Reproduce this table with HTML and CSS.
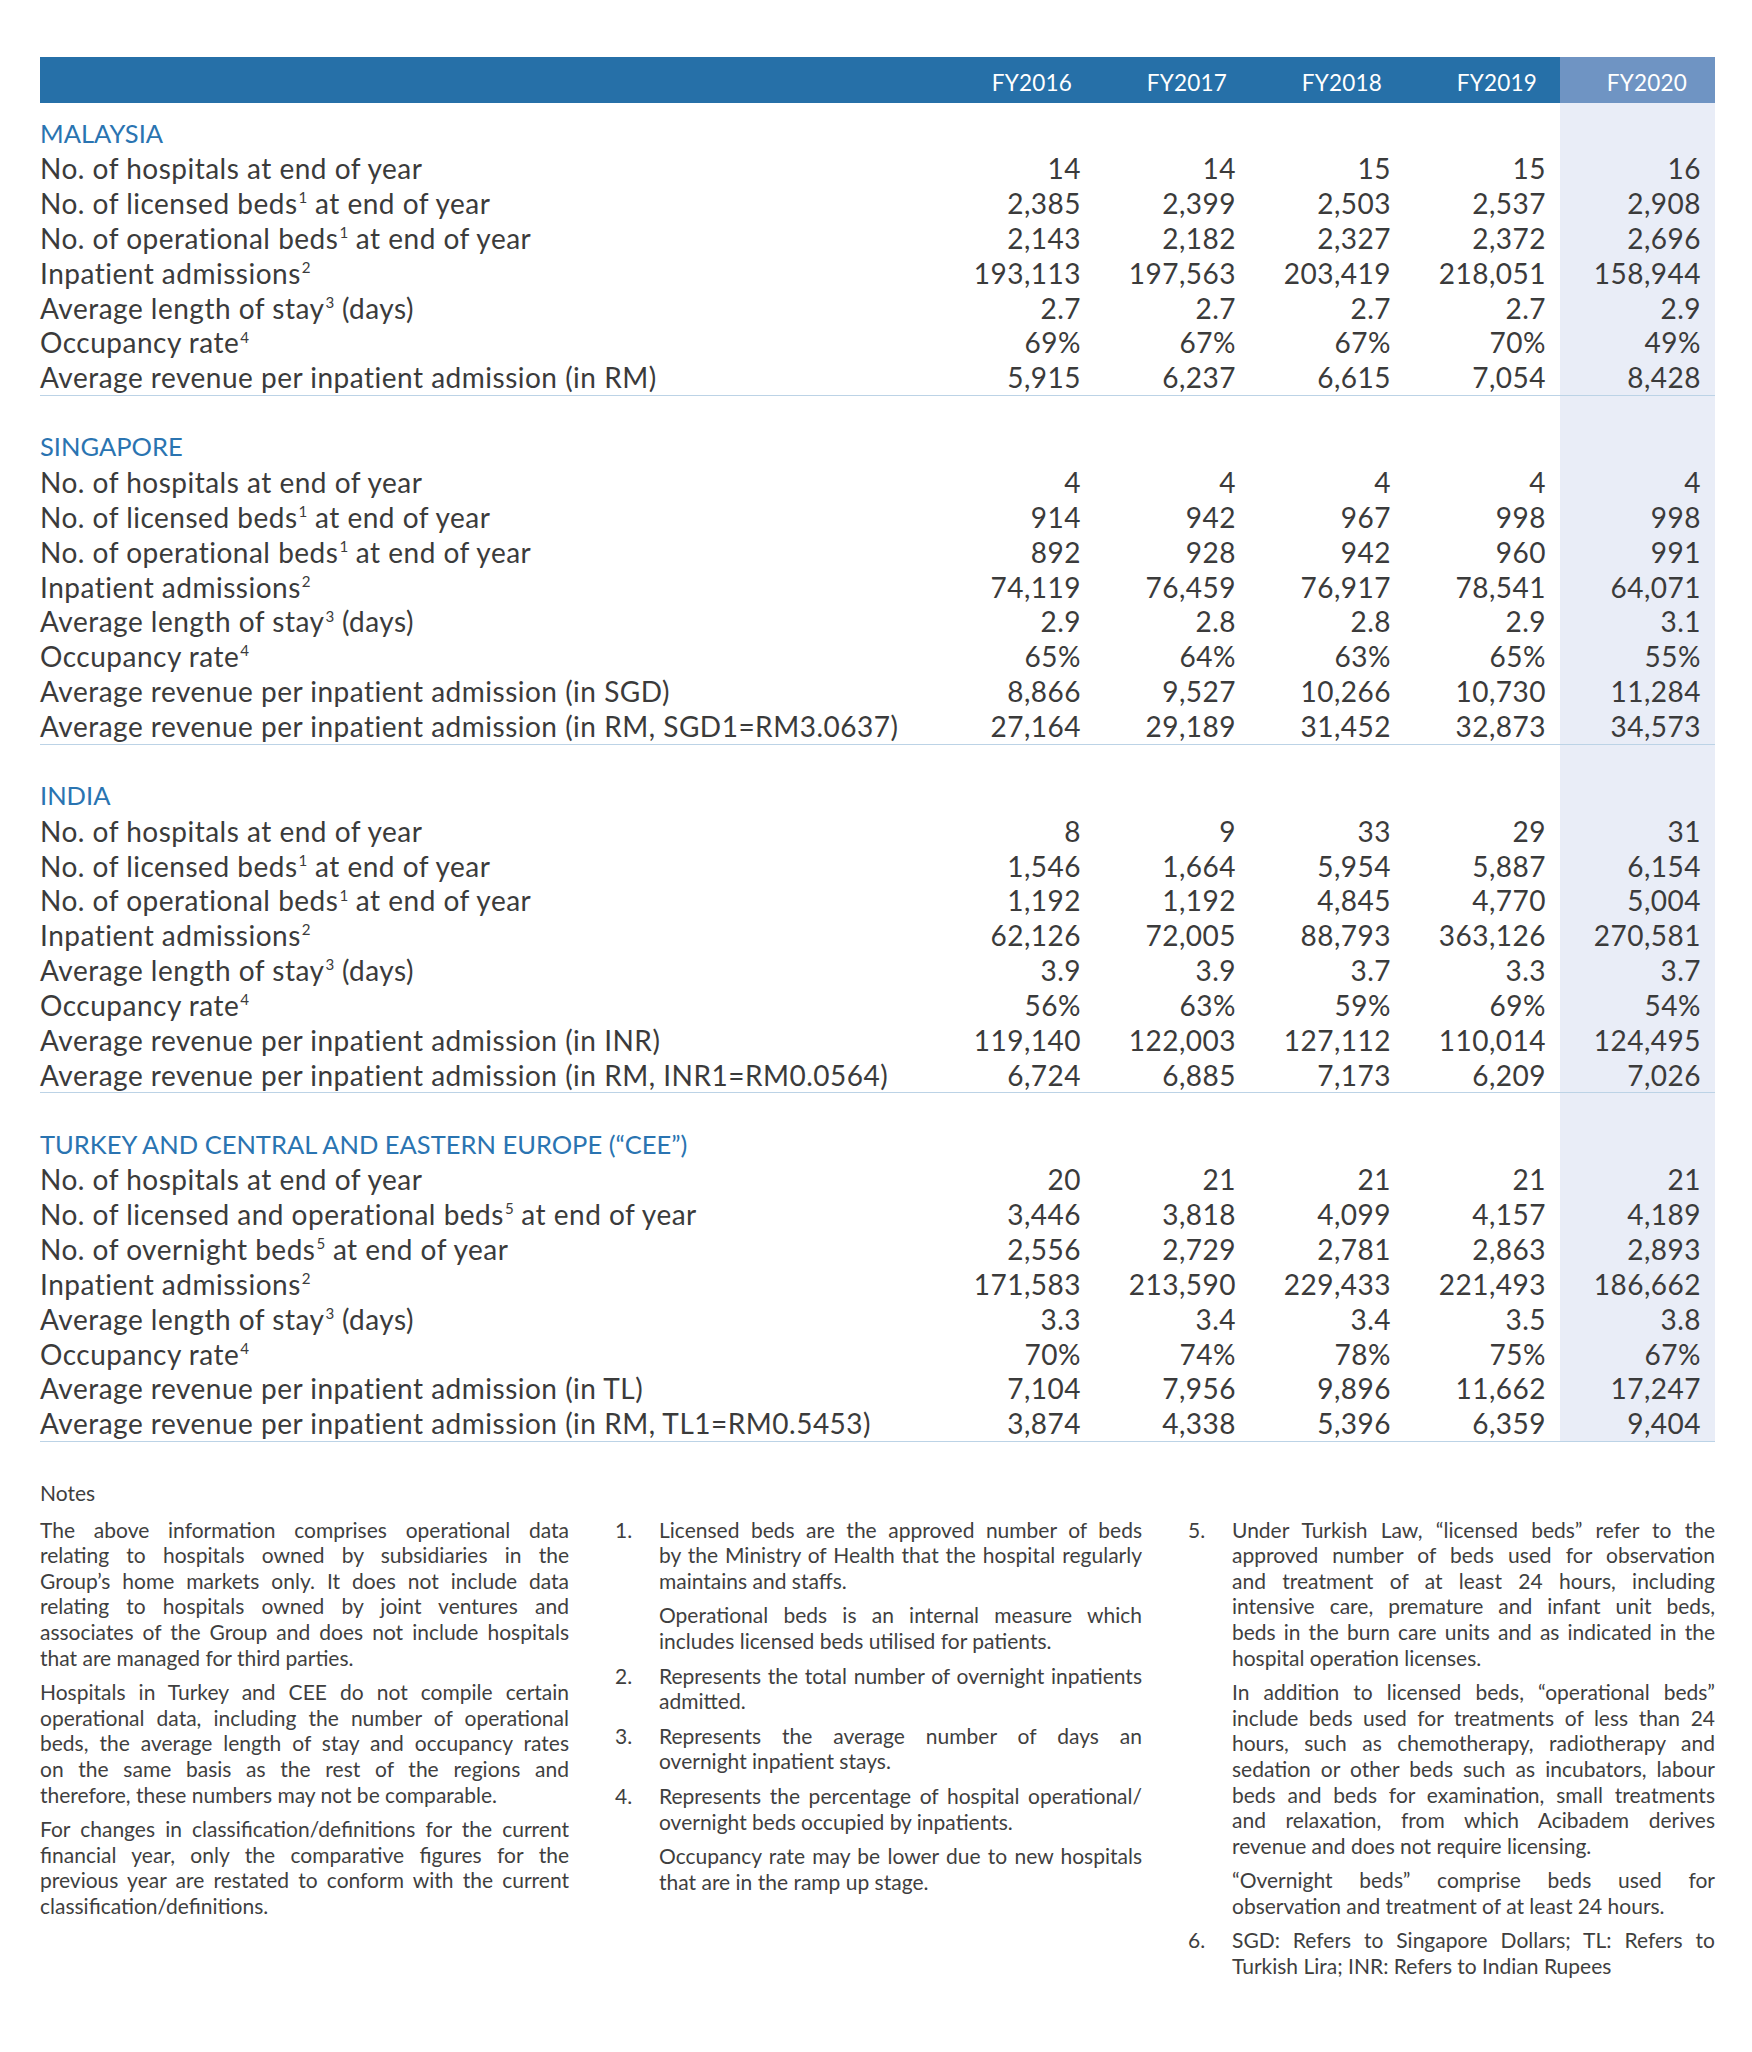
FILE: index.html
```html
<!DOCTYPE html>
<html lang="en">
<head>
<meta charset="utf-8">
<title>Operational statistics</title>
<link rel="stylesheet" href="styles.css">
</head>
<body>
<div class="page">
<table class="ops">
<colgroup><col class="c-label"><col class="c-num"><col class="c-num"><col class="c-num"><col class="c-num"><col class="c-num c-cur"></colgroup>
<thead>
<tr><th class="h-label"></th><th>FY2016</th><th>FY2017</th><th>FY2018</th><th>FY2019</th><th class="h-cur">FY2020</th></tr>
</thead>
<tbody>
<tr class="gap-top"><td></td><td></td><td></td><td></td><td></td><td></td></tr>
<tr class="region"><td>MALAYSIA</td><td></td><td></td><td></td><td></td><td></td></tr>
<tr><td>No. of hospitals at end of year</td><td>14</td><td>14</td><td>15</td><td>15</td><td>16</td></tr>
<tr><td>No. of licensed beds<sup class="fn">1</sup> at end of year</td><td>2,385</td><td>2,399</td><td>2,503</td><td>2,537</td><td>2,908</td></tr>
<tr><td>No. of operational beds<sup class="fn">1</sup> at end of year</td><td>2,143</td><td>2,182</td><td>2,327</td><td>2,372</td><td>2,696</td></tr>
<tr><td>Inpatient admissions<sup class="fn">2</sup></td><td>193,113</td><td>197,563</td><td>203,419</td><td>218,051</td><td>158,944</td></tr>
<tr><td>Average length of stay<sup class="fn">3</sup> (days)</td><td>2.7</td><td>2.7</td><td>2.7</td><td>2.7</td><td>2.9</td></tr>
<tr><td>Occupancy rate<sup class="fn">4</sup></td><td>69%</td><td>67%</td><td>67%</td><td>70%</td><td>49%</td></tr>
<tr class="end"><td>Average revenue per inpatient admission (in RM)</td><td>5,915</td><td>6,237</td><td>6,615</td><td>7,054</td><td>8,428</td></tr>

<tr class="gap"><td></td><td></td><td></td><td></td><td></td><td></td></tr>
<tr class="region"><td>SINGAPORE</td><td></td><td></td><td></td><td></td><td></td></tr>
<tr><td>No. of hospitals at end of year</td><td>4</td><td>4</td><td>4</td><td>4</td><td>4</td></tr>
<tr><td>No. of licensed beds<sup class="fn">1</sup> at end of year</td><td>914</td><td>942</td><td>967</td><td>998</td><td>998</td></tr>
<tr><td>No. of operational beds<sup class="fn">1</sup> at end of year</td><td>892</td><td>928</td><td>942</td><td>960</td><td>991</td></tr>
<tr><td>Inpatient admissions<sup class="fn">2</sup></td><td>74,119</td><td>76,459</td><td>76,917</td><td>78,541</td><td>64,071</td></tr>
<tr><td>Average length of stay<sup class="fn">3</sup> (days)</td><td>2.9</td><td>2.8</td><td>2.8</td><td>2.9</td><td>3.1</td></tr>
<tr><td>Occupancy rate<sup class="fn">4</sup></td><td>65%</td><td>64%</td><td>63%</td><td>65%</td><td>55%</td></tr>
<tr><td>Average revenue per inpatient admission (in SGD)</td><td>8,866</td><td>9,527</td><td>10,266</td><td>10,730</td><td>11,284</td></tr>
<tr class="end"><td>Average revenue per inpatient admission (in RM, SGD1=RM3.0637)</td><td>27,164</td><td>29,189</td><td>31,452</td><td>32,873</td><td>34,573</td></tr>

<tr class="gap"><td></td><td></td><td></td><td></td><td></td><td></td></tr>
<tr class="region"><td>INDIA</td><td></td><td></td><td></td><td></td><td></td></tr>
<tr><td>No. of hospitals at end of year</td><td>8</td><td>9</td><td>33</td><td>29</td><td>31</td></tr>
<tr><td>No. of licensed beds<sup class="fn">1</sup> at end of year</td><td>1,546</td><td>1,664</td><td>5,954</td><td>5,887</td><td>6,154</td></tr>
<tr><td>No. of operational beds<sup class="fn">1</sup> at end of year</td><td>1,192</td><td>1,192</td><td>4,845</td><td>4,770</td><td>5,004</td></tr>
<tr><td>Inpatient admissions<sup class="fn">2</sup></td><td>62,126</td><td>72,005</td><td>88,793</td><td>363,126</td><td>270,581</td></tr>
<tr><td>Average length of stay<sup class="fn">3</sup> (days)</td><td>3.9</td><td>3.9</td><td>3.7</td><td>3.3</td><td>3.7</td></tr>
<tr><td>Occupancy rate<sup class="fn">4</sup></td><td>56%</td><td>63%</td><td>59%</td><td>69%</td><td>54%</td></tr>
<tr><td>Average revenue per inpatient admission (in INR)</td><td>119,140</td><td>122,003</td><td>127,112</td><td>110,014</td><td>124,495</td></tr>
<tr class="end"><td>Average revenue per inpatient admission (in RM, INR1=RM0.0564)</td><td>6,724</td><td>6,885</td><td>7,173</td><td>6,209</td><td>7,026</td></tr>

<tr class="gap"><td></td><td></td><td></td><td></td><td></td><td></td></tr>
<tr class="region"><td>TURKEY AND CENTRAL AND EASTERN EUROPE (“CEE”)</td><td></td><td></td><td></td><td></td><td></td></tr>
<tr><td>No. of hospitals at end of year</td><td>20</td><td>21</td><td>21</td><td>21</td><td>21</td></tr>
<tr><td>No. of licensed and operational beds<sup class="fn">5</sup> at end of year</td><td>3,446</td><td>3,818</td><td>4,099</td><td>4,157</td><td>4,189</td></tr>
<tr><td>No. of overnight beds<sup class="fn">5</sup> at end of year</td><td>2,556</td><td>2,729</td><td>2,781</td><td>2,863</td><td>2,893</td></tr>
<tr><td>Inpatient admissions<sup class="fn">2</sup></td><td>171,583</td><td>213,590</td><td>229,433</td><td>221,493</td><td>186,662</td></tr>
<tr><td>Average length of stay<sup class="fn">3</sup> (days)</td><td>3.3</td><td>3.4</td><td>3.4</td><td>3.5</td><td>3.8</td></tr>
<tr><td>Occupancy rate<sup class="fn">4</sup></td><td>70%</td><td>74%</td><td>78%</td><td>75%</td><td>67%</td></tr>
<tr><td>Average revenue per inpatient admission (in TL)</td><td>7,104</td><td>7,956</td><td>9,896</td><td>11,662</td><td>17,247</td></tr>
<tr class="end"><td>Average revenue per inpatient admission (in RM, TL1=RM0.5453)</td><td>3,874</td><td>4,338</td><td>5,396</td><td>6,359</td><td>9,404</td></tr>
</tbody>
</table>

<section class="notes">
<h2 class="notes-title">Notes</h2>
<div class="notes-grid">
<div class="ncol">
<p><span class="ln">The above information comprises operational data</span><span class="ln">relating to hospitals owned by subsidiaries in the</span><span class="ln">Group’s home markets only. It does not include data</span><span class="ln">relating to hospitals owned by joint ventures and</span><span class="ln">associates of the Group and does not include hospitals</span><span class="ln last">that are managed for third parties.</span></p>
<p><span class="ln">Hospitals in Turkey and CEE do not compile certain</span><span class="ln">operational data, including the number of operational</span><span class="ln">beds, the average length of stay and occupancy rates</span><span class="ln">on the same basis as the rest of the regions and</span><span class="ln last">therefore, these numbers may not be comparable.</span></p>
<p><span class="ln">For changes in classification/definitions for the current</span><span class="ln">financial year, only the comparative figures for the</span><span class="ln">previous year are restated to conform with the current</span><span class="ln last">classification/definitions.</span></p>
</div>
<div class="ncol">
<div class="item"><span class="num">1.</span><div class="ibody">
<p><span class="ln">Licensed beds are the approved number of beds</span><span class="ln">by the Ministry of Health that the hospital regularly</span><span class="ln last">maintains and staffs.</span></p>
<p><span class="ln">Operational beds is an internal measure which</span><span class="ln last">includes licensed beds utilised for patients.</span></p>
</div></div>
<div class="item"><span class="num">2.</span><div class="ibody">
<p><span class="ln">Represents the total number of overnight inpatients</span><span class="ln last">admitted.</span></p>
</div></div>
<div class="item"><span class="num">3.</span><div class="ibody">
<p><span class="ln">Represents the average number of days an</span><span class="ln last">overnight inpatient stays.</span></p>
</div></div>
<div class="item"><span class="num">4.</span><div class="ibody">
<p><span class="ln">Represents the percentage of hospital operational/</span><span class="ln last">overnight beds occupied by inpatients.</span></p>
<p><span class="ln">Occupancy rate may be lower due to new hospitals</span><span class="ln last">that are in the ramp up stage.</span></p>
</div></div>
</div>
<div class="ncol">
<div class="item"><span class="num">5.</span><div class="ibody">
<p><span class="ln">Under Turkish Law, “licensed beds” refer to the</span><span class="ln">approved number of beds used for observation</span><span class="ln">and treatment of at least 24 hours, including</span><span class="ln">intensive care, premature and infant unit beds,</span><span class="ln">beds in the burn care units and as indicated in the</span><span class="ln last">hospital operation licenses.</span></p>
<p><span class="ln">In addition to licensed beds, “operational beds”</span><span class="ln">include beds used for treatments of less than 24</span><span class="ln">hours, such as chemotherapy, radiotherapy and</span><span class="ln">sedation or other beds such as incubators, labour</span><span class="ln">beds and beds for examination, small treatments</span><span class="ln">and relaxation, from which Acibadem derives</span><span class="ln last">revenue and does not require licensing.</span></p>
<p><span class="ln">“Overnight beds” comprise beds used for</span><span class="ln last">observation and treatment of at least 24 hours.</span></p>
</div></div>
<div class="item"><span class="num">6.</span><div class="ibody">
<p><span class="ln">SGD: Refers to Singapore Dollars; TL: Refers to</span><span class="ln last">Turkish Lira; INR: Refers to Indian Rupees</span></p>
</div></div>
</div>
</div>
</section>
</div>
</body>
</html>
```

FILE: styles.css
```css
* { box-sizing: border-box; }

body {
  margin: 0;
  background: #ffffff;
  font-family: Lato, "Liberation Sans", sans-serif;
  color: #3b3b3b;
}

.page {
  width: 1752px;
  padding: 57px 37px 60px 40px;
}

/* ---------- table ---------- */
.ops {
  width: 1675px;
  border-collapse: collapse;
  table-layout: fixed;
  font-size: 28px;
  letter-spacing: 0.5px;
}

.c-label { width: 900px; }
.c-num { width: 155px; }
.c-cur { background: #e9edf7; }

.ops th {
  height: 46px;
  padding: 4px 23px 0 0;
  background: #2670a8;
  color: #ffffff;
  font-weight: 400;
  font-size: 22.5px;
  letter-spacing: 0.2px;
  text-align: right;
  vertical-align: middle;
}

.ops th.h-cur {
  background: #6f94c3;
  padding-right: 28px;
}

.ops td {
  height: 34.82px;
  padding: 0 14px 0 0;
  line-height: 34.82px;
  text-align: right;
  white-space: nowrap;
  vertical-align: middle;
}

.ops td:first-child {
  text-align: left;
  padding: 0;
}

.ops .gap-top td { height: 13.6px; line-height: 0; }
.ops .gap td { height: 34.82px; }

.ops .region td:first-child {
  color: #2a74b1;
  font-size: 25.5px;
  letter-spacing: 0;
  vertical-align: top;
  line-height: 32px;
}

.ops .end td { border-bottom: 1px solid #bcd3e6; }

.fn {
  font-size: 0.54em;
  line-height: 0;
  vertical-align: 0.72em;
  margin-left: 1px;
  letter-spacing: 0;
}

/* ---------- notes ---------- */
.notes {
  margin-top: 38px;
  font-size: 21px;
  line-height: 25.6px;
  color: #3f3f3f;
}

.notes-title {
  margin: 0 0 11px;
  font-size: 21px;
  font-weight: 400;
  line-height: 25.6px;
}

.notes-grid {
  display: grid;
  grid-template-columns: 529px 527px 527px;
  column-gap: 46px;
}

.notes p { margin: 0 0 9px; }

.ln {
  display: block;
  white-space: nowrap;
  text-align: justify;
  text-align-last: justify;
}

.ln.last { text-align-last: left; }

.item { display: flex; }

.num {
  flex: none;
  width: 44px;
}

.ibody { flex: 1; min-width: 0; }
```
